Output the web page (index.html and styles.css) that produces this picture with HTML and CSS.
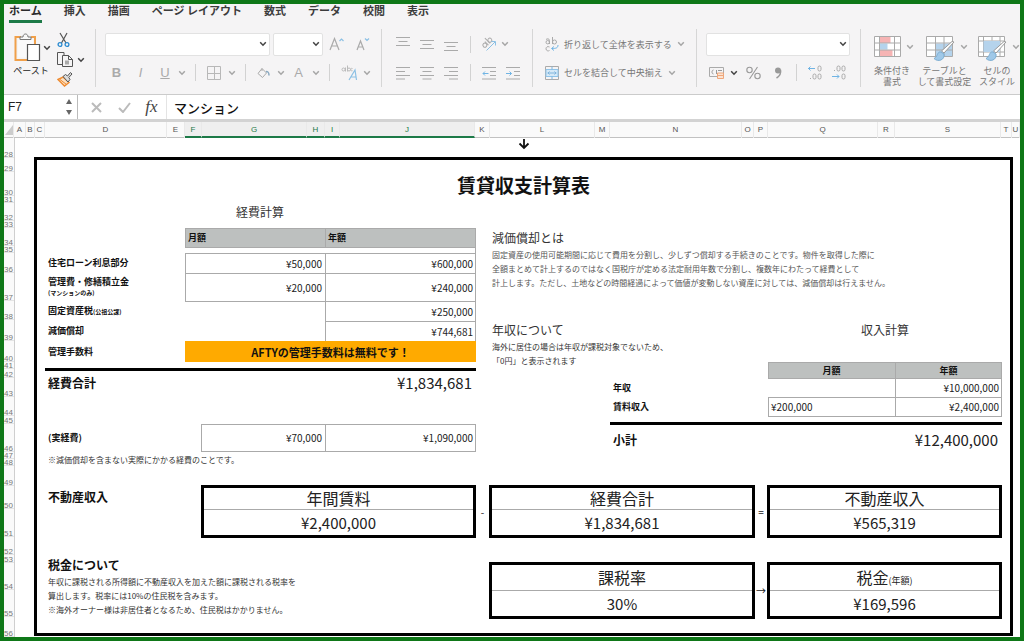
FILE: index.html
```html
<!DOCTYPE html>
<html lang="ja">
<head>
<meta charset="utf-8">
<meta name="viewport" content="width=device-width, initial-scale=1">
<title>賃貸収支計算表</title>
<link rel="stylesheet" href="styles.css">
</head>
<body>
<svg class="defs" aria-hidden="true">
  <symbol id="chev" viewBox="0 0 8 6"><path d="M1.2 1.2 4 4.2 6.8 1.2" fill="none" stroke="currentColor" stroke-width="1.5"/></symbol>
  <symbol id="lines-c" viewBox="0 0 14 14"><path d="M0 1.500h14M2.500 5.500h9M0 9.500h14M2.500 13h9" fill="none" stroke="currentColor"/></symbol>
</svg>
<div class="app">
  <header class="ribbon">
    <nav class="tabs">
      <a class="tab tab-on" href="#">ホーム</a><a class="tab" href="#">挿入</a><a class="tab" href="#">描画</a><a class="tab" href="#">ページ レイアウト</a><a class="tab" href="#">数式</a><a class="tab" href="#">データ</a><a class="tab" href="#">校閲</a><a class="tab" href="#">表示</a>
    </nav>
    <div class="tools">
      <div class="group clipboard">
        <button class="paste" type="button">
          <span class="paste-top">
            <svg width="28" height="30" viewBox="0 0 28 30" fill="none"><path d="M7 4H1.500V27H14M17 4h4v7" stroke="#f0a04a" stroke-width="2"/><path d="M4 6.500V24.500h9V11h6V6.500" fill="#fafafa"/><path d="M6 6.500V4h3c0-4 5-4 5 0h3v2.500z" fill="#f8f8f8" stroke="#777"/><path d="M13.500 11.500h12v16h-12z" fill="#fff" stroke="#555" stroke-width="1.200"/></svg>
            <svg class="chev dark"><use href="#chev"/></svg>
          </span>
          <span>ペースト</span>
        </button>
        <div class="clip-col">
          <button type="button" aria-label="切り取り"><svg width="14" height="16" viewBox="0 0 14 16" fill="none"><path d="M3 1l6 10M10 1 4.500 11" stroke="#555" stroke-width="1.200"/><circle cx="3" cy="12.500" r="1.900" stroke="#2b8bd0" stroke-width="1.300"/><circle cx="10" cy="12.500" r="1.900" stroke="#2b8bd0" stroke-width="1.300"/></svg></button>
          <button type="button" aria-label="コピー"><svg width="16" height="16" viewBox="0 0 16 16" fill="none" stroke="#555"><path d="M5 12.500H.5V.5H7V3"/><path d="M5.500 3.500h6l4 4v7h-10zM11.500 3.500v4h4"/><path d="M8 8.500h4v4H8z" fill="#aaa" stroke="none"/></svg><svg class="chev dark"><use href="#chev"/></svg></button>
          <button type="button" aria-label="書式のコピー"><svg width="16" height="16" viewBox="0 0 16 16" fill="none"><path d="M1 8.500 6 6l6 5.500L7.500 15z" fill="#fbe0c2" stroke="#ee8a30" stroke-width="1.400"/><path d="M3 8.500 9.500 13.500" stroke="#ee8a30"/><path d="M6 5.500 8.500 3.500 10.500 5 13.500 1.500 15 3 11.800 6.500 13 8.500 11 11z" fill="#ddd" stroke="#555"/></svg></button>
        </div>
      </div>
      <div class="group font">
        <div class="row font-top">
          <span class="combo"><select aria-label="フォント"><option></option></select><svg class="chev dark"><use href="#chev"/></svg></span>
          <span class="combo"><select aria-label="フォント サイズ"><option></option></select><svg class="chev dark"><use href="#chev"/></svg></span>
          <button type="button" aria-label="拡大"><svg width="16" height="14" viewBox="0 0 16 14" fill="none"><path d="M1 13 5.500 1.500 10 13M2.500 9h6" stroke="#aaa" stroke-width="1.200"/><path d="M10.500 4 12.500 2l2 2" stroke="#8cc0e4" stroke-width="1.200"/></svg></button>
          <button type="button" aria-label="縮小"><svg width="16" height="14" viewBox="0 0 16 14" fill="none"><path d="M2 13 5.500 4 9 13M3.200 10h4.600" stroke="#aaa" stroke-width="1.200"/><path d="M10 1.500 12 3.500l2-2" stroke="#8cc0e4" stroke-width="1.200"/></svg></button>
        </div>
        <div class="row font-bottom">
          <button type="button"><b>B</b></button><button type="button"><i>I</i></button><button type="button"><u>U</u></button><svg class="chev"><use href="#chev"/></svg><span class="bar"></span>
          <button type="button" aria-label="罫線"><svg width="14" height="14" viewBox="0 0 14 14" fill="none" stroke="#b8b8b8"><path d="M.5 .5h13v13H.5zM7.500 .5v13M.5 7.500h13"/></svg></button><svg class="chev"><use href="#chev"/></svg><span class="bar"></span>
          <button type="button" aria-label="塗りつぶし"><svg width="14" height="12" viewBox="0 0 14 12" fill="none"><path d="M5 1.500 9.500 6 5.500 10.500 1 6.500z M5 1.500V4" stroke="#aaa"/><path d="M9 4.500c2.500 0 3 1 3 4" stroke="#8aa9c0" stroke-width="1.500"/></svg></button><svg class="chev"><use href="#chev"/></svg>
          <button type="button">A</button><svg class="chev"><use href="#chev"/></svg><span class="bar"></span>
          <button type="button" aria-label="ふりがな"><svg width="18" height="16" viewBox="0 0 18 16" fill="none"><g stroke="#bbb"><circle cx="2.500" cy="4.500" r="1.500"/><path d="M4.500 2.500v4M6.500 .5v6M11.500 3.500c-2-1.500-2.500 3.500 0 2.200"/><circle cx="8" cy="4.500" r="1.500"/></g><path d="M8 15 14 5l1.500 10M10 12h5" stroke="#8cc0e4" stroke-width="1.200"/></svg></button><svg class="chev"><use href="#chev"/></svg>
        </div>
      </div>
      <div class="group align">
        <div class="row align-row">
          <button type="button" aria-label="上揃え"><svg width="14" height="14" viewBox="0 0 14 14" stroke="#aaa"><path d="M0 .5h14M2.500 4.500h9M0 8.500h14"/></svg></button>
          <button type="button" aria-label="上下中央揃え"><svg width="14" height="14" viewBox="0 0 14 14" stroke="#aaa"><path d="M0 3.500h14M2.500 7.500h9M0 11.500h14"/></svg></button>
          <button type="button" aria-label="下揃え"><svg width="14" height="14" viewBox="0 0 14 14" stroke="#aaa"><path d="M0 5.500h14M2.500 9.500h9M0 13.500h14"/></svg></button>
          <span class="bar"></span>
          <button type="button" aria-label="方向"><svg width="16" height="16" viewBox="0 0 16 16" fill="none"><g transform="rotate(-45 6 7)" stroke="#aaa"><circle cx="3" cy="7" r="2"/><path d="M5.500 4.500V9.500M8 2v7.500"/><circle cx="10" cy="7" r="2"/></g><path d="M5.500 14.500 14 6M10.500 5.500H14.500V9.500" stroke="#8cc0e4"/></svg></button>
          <svg class="chev start"><use href="#chev"/></svg>
        </div>
        <div class="row align-row">
          <button type="button" aria-label="左揃え"><svg width="14" height="14" viewBox="0 0 14 14" stroke="#aaa"><path d="M0 1.500h14M0 5.500h9M0 9.500h14M0 13h9"/></svg></button>
          <button type="button" aria-label="中央揃え"><svg class="gray" width="14" height="14"><use href="#lines-c"/></svg></button>
          <button type="button" aria-label="右揃え"><svg width="14" height="14" viewBox="0 0 14 14" stroke="#aaa"><path d="M0 1.500h14M5 5.500h9M0 9.500h14M5 13h9"/></svg></button>
          <span class="bar"></span>
          <button type="button" aria-label="インデント解除"><svg width="14" height="14" viewBox="0 0 14 14" fill="none" stroke="#aaa"><path d="M0 1.500h14M8 5.500h6M8 9.500h6M0 13h14"/><path d="M6.500 7.500H1M3 5.500 1 7.500l2 2" stroke="#70b4e4"/></svg></button>
          <button type="button" aria-label="インデント"><svg width="14" height="14" viewBox="0 0 14 14" fill="none" stroke="#aaa"><path d="M0 1.500h14M8 5.500h6M8 9.500h6M0 13h14"/><path d="M0 7.500H5.500M3.500 5.500l2 2-2 2" stroke="#70b4e4"/></svg></button>
        </div>
      </div>
      <div class="group wrap">
        <button class="row wide" type="button"><svg width="14" height="16" viewBox="0 0 14 16" fill="none"><g stroke="#aaa"><path d="M1 3.500c1-1 3.500-1 3.500 1V8"/><circle cx="2.700" cy="6.200" r="1.700"/><path d="M7.500 1v7"/><circle cx="9.500" cy="6" r="2"/><path d="M4.500 11c-2-1-3.500 0-3.500 1.800S3 15.500 4.500 14.500"/></g><path d="M13 9c0 3-2 3.500-6 3.500M9 10.500l-2.500 2L9 14.500" stroke="#70b4e4"/></svg><span>折り返して全体を表示する</span><svg class="chev"><use href="#chev"/></svg></button>
        <button class="row wide" type="button"><svg width="14" height="14" viewBox="0 0 14 14" fill="none"><path d="M.5 .5h13v13H.5z" stroke="#aaa"/><path d="M1 3.500h12v7H1z" fill="#d5e9f7" stroke="#8fc4ea"/><path d="M2.500 7h9M4.500 5.500 3 7l1.500 1.500M9.500 5.500 11 7 9.500 8.500M7 .5v3M7 10.500v3" stroke="#7fb4dc"/></svg><span>セルを結合して中央揃え</span><svg class="chev"><use href="#chev"/></svg></button>
      </div>
      <div class="group number">
        <div class="row"><span class="combo"><select aria-label="表示形式"><option></option></select><svg class="chev dark"><use href="#chev"/></svg></span></div>
        <div class="row number-row">
          <button type="button" aria-label="通貨"><svg width="16" height="14" viewBox="0 0 16 14" fill="none"><path d="M.5 1.500h14v9H.5z" stroke="#aaa"/><path d="M4.500 4c-2 0-2 4 0 4M7.500 4v4M9 4.500h4" stroke="#999"/><path d="M8.500 7h6v5.500h-6zM8.500 9.500h6" fill="#fbe3d2" stroke="#efa77b"/></svg></button><svg class="chev dark"><use href="#chev"/></svg>
          <button type="button" aria-label="パーセント"><svg width="15" height="14" viewBox="0 0 15 14" fill="none" stroke="#999" stroke-width="1.100"><circle cx="3.500" cy="4" r="2.700"/><circle cx="11.500" cy="10" r="2.700"/><path d="M11.500 1 3.500 13"/></svg></button>
          <button type="button" aria-label="桁区切り"><svg width="9" height="12" viewBox="0 0 9 12"><circle cx="4" cy="3.500" r="3" fill="#999"/><path d="M6.500 3c.8 4-1.500 6.500-4 8" fill="none" stroke="#999" stroke-width="1.500"/></svg></button>
          <span class="bar"></span>
          <button type="button" aria-label="小数点以下を増やす"><svg width="15" height="15" viewBox="0 0 15 15" fill="none" stroke="#aaa"><rect x="11" y="1" width="3" height="5" rx="1.500"/><rect x="6" y="9" width="3" height="5" rx="1.500"/><rect x="11" y="9" width="3" height="5" rx="1.500"/><path d="M3 13.500h1"/><path d="M8 3.500H1M3.500 1.500l-2 2 2 2" stroke="#70b4e4"/></svg></button>
          <button type="button" aria-label="小数点以下を減らす"><svg width="15" height="15" viewBox="0 0 15 15" fill="none" stroke="#aaa"><rect x="6" y="1" width="3" height="5" rx="1.500"/><rect x="11" y="1" width="3" height="5" rx="1.500"/><rect x="11" y="9" width="3" height="5" rx="1.500"/><path d="M3 5.500h1"/><path d="M1 11.500H8M6 9.500l2 2-2 2" stroke="#70b4e4"/></svg></button>
        </div>
      </div>
      <div class="group styles">
        <button type="button"><span class="style-top"><svg width="28" height="22" viewBox="0 0 28 22" fill="none"><path d="M.5 .5h26v20H.5z" fill="#fff"/><path d="M5.500 1h11v6h-11zM5.500 14h13v6h-13z" fill="#f6b4b4"/><path d="M5.500 7.500h8v6h-8z" fill="#b5d3ec"/><path d="M.5 .5h26v20H.5zM5.500 .5v20M20.500 .5v20M.5 7h26M.5 14h26" stroke="#aaa"/></svg><svg class="chev"><use href="#chev"/></svg></span><span>条件付き<br>書式</span></button>
        <button type="button"><span class="style-top"><svg width="30" height="26" viewBox="0 0 30 26" fill="none"><path d="M.5 .5h26v20H.5z" fill="#fff"/><path d="M9.500 7.500h17v13h-17z" fill="#b5d3ec"/><path d="M.5 .5h26v20H.5zM9.500 .5v20M18 .5v20M.5 7h26M.5 14h26" stroke="#aaa"/><path d="M28 6 18 17l-2.500-2L26 5.500z" fill="#fff" stroke="#999"/><path d="M15 16c-4-1-3 5-7 6.500 4 4 11 1.500 10-4.500z" fill="#9fc8e8" stroke="#7daed2"/></svg><svg class="chev"><use href="#chev"/></svg></span><span>テーブルと<br>して書式設定</span></button>
        <button type="button"><span class="style-top"><svg width="30" height="26" viewBox="0 0 30 26" fill="none"><path d="M.5 .5h26v20H.5z" fill="#fff"/><path d="M.5 .5h26v20H.5zM5.500 .5v20M22 .5v20M.5 5h26M.5 16h26M14 .5v4" stroke="#aaa"/><path d="M5.500 5h16.500v11h-16.500z" fill="#b5d3ec"/><path d="M28 6 18 17l-2.500-2L26 5.500z" fill="#fff" stroke="#999"/><path d="M15 16c-4-1-3 5-7 6.500 4 4 11 1.500 10-4.500z" fill="#9fc8e8" stroke="#7daed2"/></svg><svg class="chev"><use href="#chev"/></svg></span><span>セルの<br>スタイル</span></button>
      </div>
    </div>
  </header>

  <div class="formula">
    <div class="namebox"><input type="text" value="F7" aria-label="名前ボックス"><svg width="8" height="16" viewBox="0 0 8 16" fill="#666"><path d="M4 0 7 5H1zM4 16 1 11h6z"/></svg></div>
    <div class="fx-tools">
      <button type="button" aria-label="キャンセル"><svg width="11" height="11" viewBox="0 0 11 11" stroke="#bbb" stroke-width="2"><path d="M1 1l9 9M10 1l-9 9"/></svg></button>
      <button type="button" aria-label="入力"><svg width="13" height="11" viewBox="0 0 13 11" fill="none" stroke="#bbb" stroke-width="2"><path d="M1 6l4 4L12 1"/></svg></button>
      <button class="fx" type="button">fx</button>
    </div>
    <input class="fx-input" type="text" value="マンション" aria-label="数式バー">
  </div>

  <div class="cols">
    <span class="corner"><svg width="8" height="10" viewBox="0 0 8 10"><path d="M8 0v10H0z" fill="#ccc"/></svg></span>
    <span>A</span><span>B</span><span>C</span><span>D</span><span>E</span><span class="on">F</span><span class="on">G</span><span class="on">H</span><span class="on">I</span><span class="on">J</span><span>K</span><span>L</span><span>M</span><span>N</span><span>O</span><span>P</span><span>Q</span><span>R</span><span>S</span><span>T</span><span>U</span>
  </div>

  <div class="work">
    <div class="rows">
      <span>28</span><span>29</span><span>30</span><span>31</span><span>32</span><span>33</span><span>34</span><span>35</span><span>36</span><span>37</span><span>38</span><span>39</span><span>40</span><span>41</span><span>42</span><span>43</span><span>44</span><span>45</span><span>46</span><span>47</span><span>48</span><span>49</span><span>50</span><span>51</span><span>52</span><span>53</span><span>54</span><span>55</span><span>56</span>
    </div>
    <main class="sheet">
      <div class="down"><svg width="12" height="12" viewBox="0 0 12 12" fill="none" stroke="#111" stroke-width="1.800"><path d="M6 1v9M1.500 5.500 6 10l4.500-4.500"/></svg></div>
      <div class="frame">
        <h1>賃貸収支計算表</h1>
        <div class="halves">
          <section class="cost">
            <h2>経費計算</h2>
            <table>
              <colgroup><col class="c-label"><col class="c-month"><col></colgroup>
              <tr class="head"><td></td><th class="cell">月額</th><th class="cell last">年額</th></tr>
              <tr class="space"><td></td><td class="top"></td><td class="last edge"></td></tr>
              <tr class="r20"><th>住宅ローン利息部分</th><td class="cell">¥50,000</td><td class="cell last">¥600,000</td></tr>
              <tr class="r28"><th>管理費・修繕積立金<small class="under">(マンションのみ)</small></th><td class="cell">¥20,000</td><td class="cell last">¥240,000</td></tr>
              <tr class="r20"><th>固定資産税<small>(公祖公課)</small></th><td class="top"></td><td class="cell last">¥250,000</td></tr>
              <tr class="r20"><th>減価償却</th><td></td><td class="cell last">¥744,681</td></tr>
              <tr class="r21"><th>管理手数料</th><td class="free" colspan="2">AFTYの管理手数料は無料です！</td></tr>
            </table>
            <div class="sum"><strong>経費合計</strong><span>¥1,834,681</span></div>
            <table class="real">
              <colgroup><col class="c-real"><col class="c-rmonth"><col></colgroup>
              <tr><th>(実経費)</th><td class="cell close">¥70,000</td><td class="cell last close">¥1,090,000</td></tr>
            </table>
            <p class="dark-text">※減価償却を含まない実際にかかる経費のことです。</p>
          </section>
          <section class="income">
            <h2>減価償却とは</h2>
            <p>固定資産の使用可能期間に応じて費用を分割し、少しずつ償却する手続きのことです。物件を取得した際に<br>全額まとめて計上するのではなく国税庁が定める法定耐用年数で分割し、複数年にわたって経費として<br>計上します。ただし、土地などの時間経過によって価値が変動しない資産に対しては、減価償却は行えません。</p>
            <div class="income-grid">
              <div class="about">
                <h2>年収について</h2>
                <p class="dark-text">海外に居住の場合は年収が課税対象でないため、<br>「0円」と表示されます</p>
              </div>
              <h2 class="calc">収入計算</h2>
              <div class="income-table">
                <table>
                  <colgroup><col class="i-label"><col class="i-month"><col></colgroup>
                  <tr class="head center"><td></td><th class="cell">月額</th><th class="cell last">年額</th></tr>
                  <tr class="r19"><th>年収</th><td class="top"></td><td class="cell last">¥10,000,000</td></tr>
                  <tr class="r20"><th>賃料収入</th><td class="cell close left">¥200,000</td><td class="cell last close">¥2,400,000</td></tr>
                </table>
                <div class="sum sub"><strong>小計</strong><span>¥12,400,000</span></div>
              </div>
            </div>
          </section>
        </div>
        <div class="result">
          <h3 class="estate">不動産収入</h3>
          <div class="box"><span>年間賃料</span><span>¥2,400,000</span></div>
          <span class="op">-</span>
          <div class="box"><span>経費合計</span><span>¥1,834,681</span></div>
          <span class="op">=</span>
          <div class="box"><span>不動産収入</span><span>¥565,319</span></div>
          <div class="tax">
            <h3>税金について</h3>
            <p class="dark-text">年収に課税される所得額に不動産収入を加えた額に課税される税率を<br>算出します。税率には10%の住民税を含みます。<br>※海外オーナー様は非居住者となるため、住民税はかかりません。</p>
          </div>
          <div class="box low"><span>課税率</span><span>30%</span></div>
          <span class="op low">→</span>
          <div class="box low"><span>税金<small>(年額)</small></span><span>¥169,596</span></div>
        </div>
      </div>
    </main>
  </div>
</div>
</body>
</html>
```
FILE: styles.css
```css
* { box-sizing: border-box; }
body {
  margin: 0;
  font-family: "Noto Sans CJK JP", "Liberation Sans", sans-serif;
  font-size: 9px;
  color: #222;
}
h1, h2, h3, p { margin: 0; }
button, input, select { font: inherit; color: inherit; border: 0; padding: 0; margin: 0; background: none; }
button { display: flex; align-items: center; justify-content: center; }
svg { display: block; flex: none; }
.defs { display: none; }
.app {
  min-height: 100vh;
  border: 4px solid #0f7818;
  display: flex;
  flex-direction: column;
  overflow: hidden;
}

/* ribbon */
.ribbon { background: #f5f4f5; border-bottom: 1px solid #cbcbcb; padding-bottom: 7px; }
.tabs { display: flex; gap: 22px; padding: 0 5px; height: 25px; }
.tab {
  font-size: 11px;
  line-height: 13px;
  height: 19px;
  font-weight: 700;
  color: #3c3c3c;
  text-decoration: none;
  white-space: nowrap;
}
.tab-on { color: #2b2b2b; border-bottom: 3px solid #1d7a48; }
.tools { display: flex; height: 58px; }
.group { border-right: 1px solid #d6d6d6; display: flex; flex-direction: column; flex: none; padding: 1px 0 0 9px; }
.row { height: 29px; display: grid; align-items: center; justify-items: center; justify-content: start; }
.chev { width: 8px; height: 6px; color: #a6a6a6; }
.chev.dark { color: #444; }
.chev.start { justify-self: start; }
.bar { width: 1px; height: 17px; background: #d2d2d2; }
.gray { color: #aaa; }
.combo { display: grid; align-items: center; width: 100%; }
.combo > * { grid-area: 1 / 1; }
.combo select {
  appearance: none;
  width: 100%;
  height: 23px;
  background: #fff;
  border: 1px solid #e2e2e2;
  border-radius: 2px;
}
.combo .chev { justify-self: end; margin-right: 3px; }

.clipboard { width: 92px; flex-direction: row; gap: 6px; padding: 0 0 0 7px; }
.paste { flex-direction: column; justify-content: flex-start; padding-top: 4px; line-height: 12px; gap: 2px; }
.paste-top { display: flex; align-items: center; gap: 1px; padding-left: 3px; }
.clip-col { display: flex; flex-direction: column; justify-content: space-between; padding-top: 3px; }
.clip-col button { justify-content: flex-start; gap: 4px; }
.font { width: 286px; }
.font-top { grid-template-columns: 165px 50px 22px 24px; column-gap: 3px; }
.font-bottom {
  grid-template-columns: 23px 25px 24px 10px 16px 22px 14px 13px 24px 10px 25px 10px 16px 26px 7px;
  font: 13px "Liberation Sans", sans-serif;
  color: #aaa;
}
.align { width: 151px; }
.align-row { grid-template-columns: 24px 24px 24px 14px 24px 24px; }
.wrap { width: 164px; padding-left: 12px; }
.wide { display: flex; justify-content: flex-start; gap: 5px; color: #777; white-space: nowrap; }
.number { width: 164px; }
.number .row:first-child { grid-template-columns: 144px; }
.number-row { grid-template-columns: 22px 12px 26px 24px 12px 24px 24px; }
.styles { flex: 1; min-width: 0; border: 0; flex-direction: row; gap: 4px; padding-left: 8px; }
.styles button { flex-direction: column; justify-content: flex-start; line-height: 11px; color: #777; white-space: nowrap; min-width: 46px; }
.style-top { display: flex; align-items: flex-start; height: 36px; padding: 6px 0 0 4px; gap: 4px; }
.style-top .chev { margin-top: 8px; }

/* formula bar */
.formula { display: flex; height: 27px; background: #fff; border-bottom: 3px solid #d3d3d3; }
.namebox { width: 74px; display: flex; align-items: center; padding: 0 4px; border-right: 1px solid #bbb; }
.namebox input { flex: 1; min-width: 0; font: 12px "Liberation Sans", sans-serif; }
.fx-tools { display: grid; grid-template-columns: 37px 18px 37px; width: 89px; border-right: 1px solid #e4e4e4; }
.fx { font: italic 17px "Liberation Serif", serif; color: #444; }
.fx-input { flex: 1; min-width: 0; font-size: 13px; font-weight: 500; padding-left: 7px; color: #111; }

/* headings of the grid */
.cols {
  display: grid;
  grid-template-columns: 10px 12fr 9fr 10fr 122fr 18fr 17fr 105fr 18fr 15fr 135fr 15fr 105fr 15fr 132fr 12fr 14fr 110fr 17fr 106fr 11fr 8fr;
  height: 16px;
  background: #fafafa;
  border-bottom: 1px solid #c2c2c2;
  font: 8px/15px "Liberation Sans", sans-serif;
  color: #555;
  text-align: center;
}
.cols span { border-right: 1px solid #e9e9e9; min-width: 0; overflow: hidden; height: 16px; }
.cols .on { background: #efefef; color: #1d7a48; border-bottom: 2px solid #1d7a48; }
.corner { display: flex; align-items: center; justify-content: flex-end; }
.work { flex: 1; display: grid; grid-template-columns: 11px minmax(0, 1fr); background: #fff; }
.rows {
  display: grid;
  grid-template-rows: 20px 14px 24px 7px 18px 7px 18px 7px 20px 28px 19px 21px 21px 7px 9px 19px 19px 8px 28px 7px 7px 20px 23px 28px 18px 8px 27px 27px 1fr;
  border-right: 1px solid #cfcfcf;
  background: #fafafa;
  font: 8px/7px "Liberation Sans", sans-serif;
  color: #777;
}
.rows span {
  display: flex;
  align-items: flex-end;
  justify-content: flex-end;
  background: linear-gradient(#e4e4e4, #e4e4e4) bottom / 100% 1px no-repeat;
  padding-right: 1px;
}

/* sheet */
.sheet { padding: 0 7px 0 19px; }
.down { height: 19px; display: flex; justify-content: center; }
.frame { border: 3px solid #000; padding: 12px 8px 14px 8px; }
h1 { font-size: 19px; line-height: 26px; text-align: center; color: #111; }
h2 { font-size: 12px; line-height: 18px; font-weight: 400; color: #333; }
h3 { font-size: 12px; line-height: 18px; padding-left: 3px; color: #111; }
p { font-size: 8px; line-height: 14px; color: #555; white-space: nowrap; }
.dark-text { color: #333; }
.halves { display: grid; grid-template-columns: 431fr 510fr; column-gap: 16px; }
.cost h2 { padding: 5px 0 7px 191px; line-height: 18px; }
table { width: 100%; table-layout: fixed; border-collapse: separate; border-spacing: 0; }
th, td { padding: 0 3px; text-align: right; font-size: 10px; line-height: 12px; font-weight: 400; white-space: nowrap; }
th { text-align: left; font-size: 9px; font-weight: 700; color: #111; }
small { font-size: 6px; }
.under { display: block; line-height: 10px; }
.c-label { width: 140px; }
.c-month { width: 140px; }
.c-real { width: 156px; }
.c-rmonth { width: 124px; }
.cell { border-left: 1px solid #aaa; border-top: 1px solid #aaa; }
.last { border-right: 1px solid #aaa; padding-right: 2px; }
.close { border-bottom: 1px solid #aaa; }
.edge { border-top: 1px solid #aaa; }
.top { border-top: 1px solid #aaa; }
.left { text-align: left; padding-left: 2px; }
.head { height: 19px; }
.head .cell { background: #bdc0bf; padding-left: 2px; }
.space { height: 6px; }
.space td { line-height: 0; }
.r19 { height: 19px; }
.r20 { height: 20px; }
.r21 { height: 21px; }
.r28 { height: 28px; }
.free { background: #ffaa00; text-align: center; font-size: 11px; font-weight: 700; color: #111; }
.sum { margin-top: 6px; border-top: 3px solid #000; display: flex; justify-content: space-between; padding: 0 4px 0 3px; font-size: 15px; line-height: 24px; }
.sum strong { font-size: 12px; color: #111; }
.real { margin-top: 29px; height: 28px; }
.cost p { padding: 1px 0 0 3px; }
.income { padding-top: 31px; }
.income > p { padding-top: 1px; }
.income-grid { display: grid; grid-template-columns: 118fr 158fr 234fr; grid-template-rows: 41px auto; margin-top: 31px; }
.about { grid-area: 1 / 1 / 3 / 3; }
.about p { padding-top: 1px; }
.calc { grid-area: 1 / 3; text-align: center; }
.income-table { grid-area: 2 / 2 / 3 / 4; }
.i-label { width: 158px; }
.i-month { width: 127px; }
.center { height: 16px; }
.center th { text-align: center; }
.sub { margin-top: 5px; padding-top: 3px; }

/* result boxes */
.result { display: grid; grid-template-columns: 156fr 275fr 13fr 266fr 12fr 235fr; row-gap: 18px; margin-top: 18px; }
.estate { padding-top: 3px; }
.box { border: 3px solid #000; display: grid; grid-template-rows: 22px 25px; text-align: center; font-size: 15px; line-height: 25px; }
.box span:first-child { font-size: 16px; line-height: 20px; border-bottom: 1px solid #aaa; }
.box small { font-size: 9px; }
.box.low { grid-template-rows: 26px 25px; }
.box.low span:first-child { line-height: 24px; }
.low { margin-top: 6px; }
.op { align-self: center; text-align: center; font-size: 10px; }
.tax { grid-column: 1 / 4; }
.tax p { padding: 1px 0 0 3px; }
```
